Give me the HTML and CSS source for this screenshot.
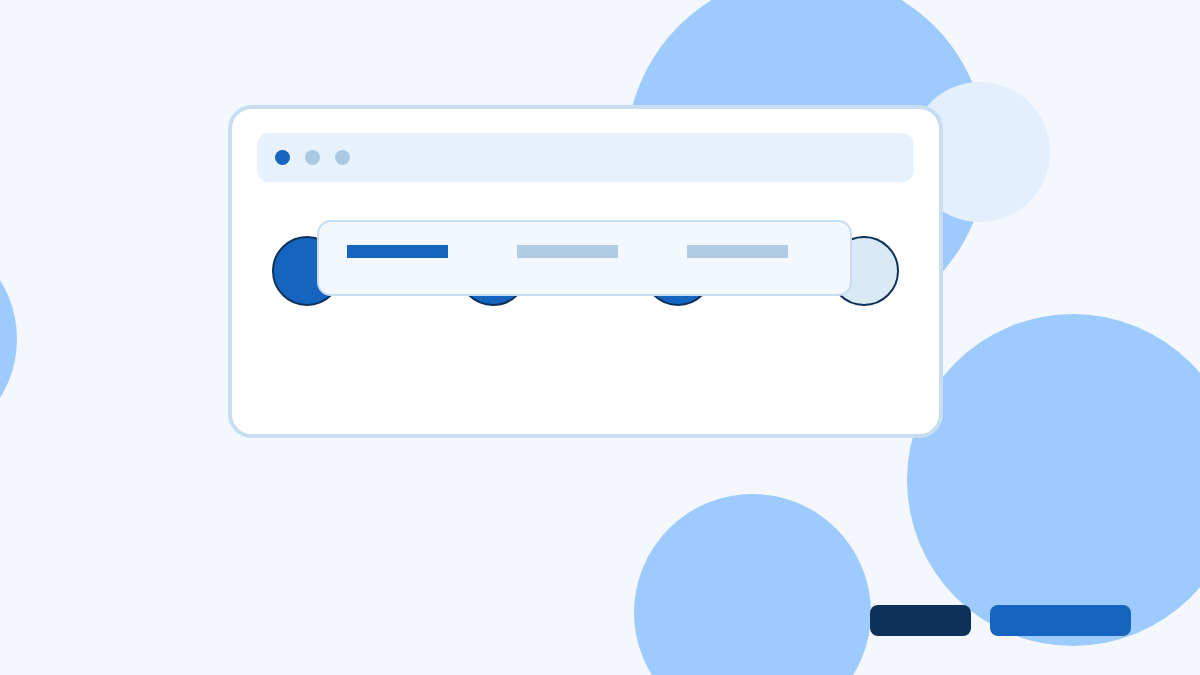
FILE: index.html
```html
<!DOCTYPE html>
<html lang="en">
<head>
<meta charset="utf-8">
<title>Stepper</title>
<link rel="stylesheet" href="styles.css">
</head>
<body>
<div class="stage">
  <div class="blob blob-top"></div>
  <div class="blob blob-light"></div>
  <div class="blob blob-right"></div>
  <div class="blob blob-bottom"></div>
  <div class="blob blob-left"></div>

  <div class="card">
    <div class="titlebar">
      <span class="dot dot-active"></span>
      <span class="dot"></span>
      <span class="dot"></span>
    </div>
    <div class="stepper">
      <span class="step step-done"></span>
      <span class="step step-done"></span>
      <span class="step step-done"></span>
      <span class="step step-todo"></span>
    </div>
    <div class="popup">
      <span class="bar bar-active"></span>
      <span class="bar"></span>
      <span class="bar"></span>
    </div>
  </div>

  <div class="actions">
    <span class="btn btn-dark"></span>
    <span class="btn btn-primary"></span>
  </div>
</div>
</body>
</html>
```

FILE: styles.css
```css
html, body {
  margin: 0;
  padding: 0;
  background: #f4f8fe;
  font-family: "Liberation Sans", Arial, sans-serif;
}

.stage {
  position: relative;
  width: 1200px;
  height: 675px;
  overflow: hidden;
  box-sizing: border-box;
  padding: 105px 0 0 228px;
  display: flex;
  flex-direction: column;
  align-items: flex-start;
}

.blob {
  position: absolute;
  border-radius: 50%;
  background: #9ecbfd;
}
.blob-top { left: 626px; top: -27px; width: 361px; height: 361px; }
.blob-light { left: 910px; top: 82px; width: 140px; height: 140px; background: #e3effc; }
.blob-right { left: 907px; top: 314px; width: 332px; height: 332px; }
.blob-bottom { left: 634px; top: 494px; width: 237px; height: 237px; }
.blob-left { left: -205px; top: 228px; width: 222px; height: 222px; }

.card {
  position: relative;
  z-index: 1;
  width: 715px;
  height: 333px;
  box-sizing: border-box;
  background: #ffffff;
  border: 4px solid #c9ddf0;
  border-radius: 24px;
  padding: 24px 25px;
}

.titlebar {
  height: 49px;
  background: #e8f2fc;
  border-radius: 12px;
  display: flex;
  align-items: center;
  gap: 15px;
  padding-left: 18px;
}

.dot {
  width: 15px;
  height: 15px;
  border-radius: 50%;
  background: #abc9e3;
}
.dot-active { background: #1565c0; }

.stepper {
  margin-top: 54px;
  padding: 0 15px 0 15px;
  display: flex;
  justify-content: space-between;
}

.step {
  width: 70px;
  height: 70px;
  box-sizing: border-box;
  border-radius: 50%;
  border: 2px solid #0d3159;
}
.step-done { background: #1565c0; }
.step-todo { background: #d9e9f6; }

.popup {
  position: absolute;
  left: 85px;
  top: 111px;
  width: 535px;
  height: 76px;
  box-sizing: border-box;
  background: #f2f8fd;
  border: 2px solid #c9ddf0;
  border-radius: 14px;
  padding: 23px 0 0 28px;
  display: flex;
  align-items: flex-start;
  gap: 69px;
}

.bar {
  width: 101px;
  height: 13px;
  background: #afcce4;
}
.bar-active { background: #1565c0; }

.actions {
  position: relative;
  z-index: 1;
  align-self: flex-end;
  margin-top: 167px;
  margin-right: 69px;
  display: flex;
  gap: 19px;
}

.btn {
  height: 31px;
  border-radius: 8px;
}
.btn-dark { width: 101px; background: #0d3159; }
.btn-primary { width: 141px; background: #1565c0; }
```
